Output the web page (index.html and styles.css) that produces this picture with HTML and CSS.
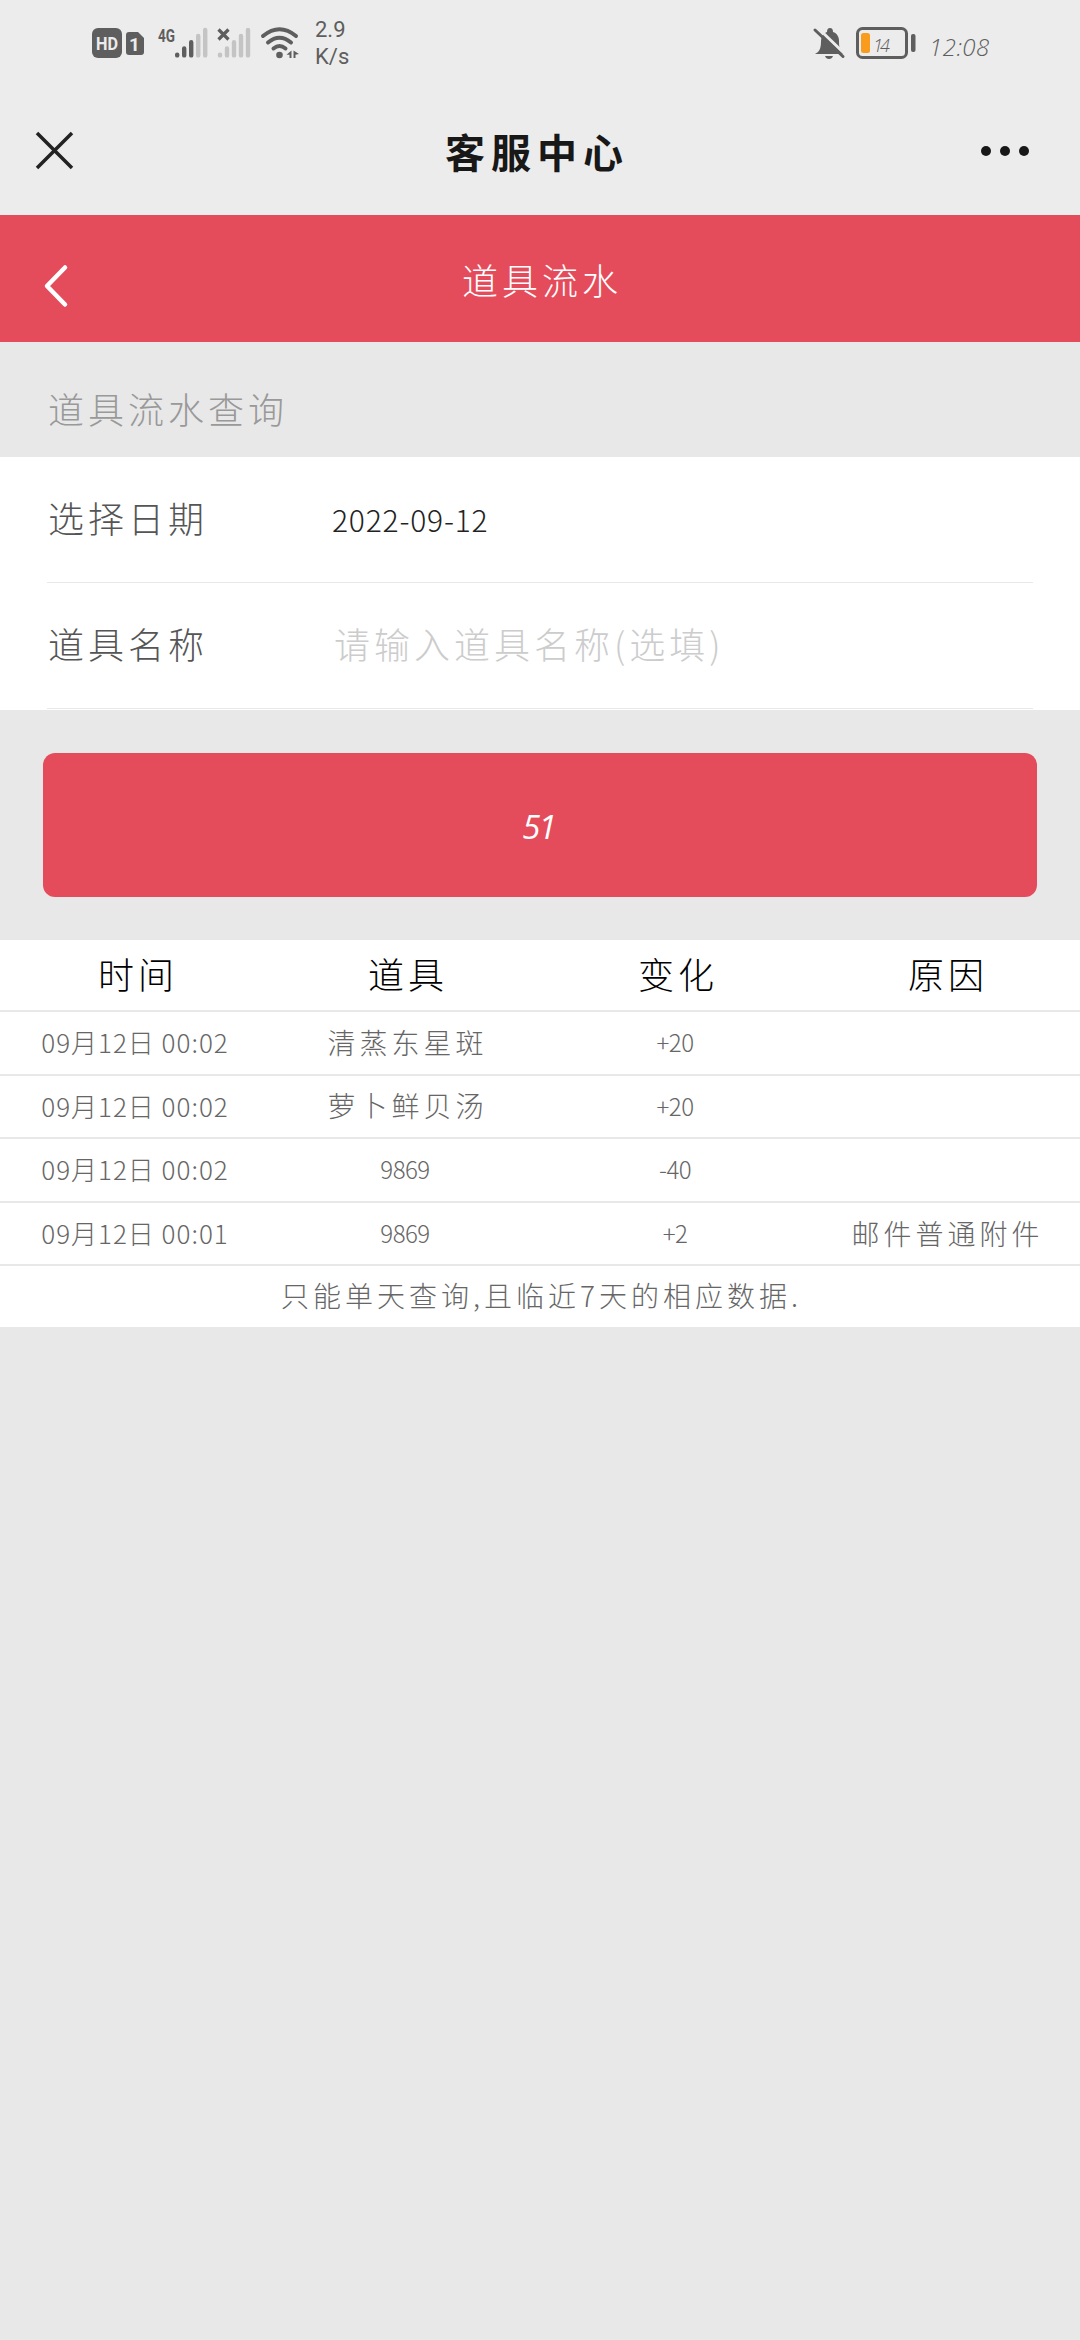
FILE: index.html
```html
<!DOCTYPE html>
<html lang="zh-CN">

<head>
  <meta charset="UTF-8">
  <meta name="viewport" content="width=device-width, initial-scale=1.0">
  <title>客服中心</title>
  <link rel="stylesheet" href="styles.css">
</head>

<body>
  <div class="status-bar">
    <div class="status-left">
      <svg class="hd" width="30" height="30" viewBox="0 0 30 30">
        <rect width="30" height="30" rx="6" fill="#5e5e5e"></rect>
        <text x="15" y="22" text-anchor="middle" textLength="22" lengthAdjust="spacingAndGlyphs">HD</text>
      </svg>
      <svg class="sim" width="18" height="23" viewBox="0 0 18 23">
        <path d="M3 0H12L18 6V20Q18 23 15 23H3Q0 23 0 20V3Q0 0 3 0Z" fill="#5e5e5e"></path>
        <text x="8.5" y="18.5" text-anchor="middle">1</text>
      </svg>
      <svg class="signal" width="50" height="32" viewBox="0 0 50 32">
        <text x="0" y="15" textLength="17" lengthAdjust="spacingAndGlyphs">4G</text>
        <g stroke="#5e5e5e" stroke-width="4.4" stroke-linecap="round">
          <path d="M19.2 27.6V28.4M26.2 21.5V28.4M33.2 15.2V28.4"></path>
          <path d="M40.2 9V28.4M47.2 3V28.4" stroke="#c4c4c4"></path>
        </g>
      </svg>
      <svg class="signal-off" width="34" height="32" viewBox="0 0 34 32">
        <g stroke="#c4c4c4" stroke-width="4.4" stroke-linecap="round">
          <path d="M3 27.6V28.4M10 21.5V28.4M17 15.2V28.4M24 9V28.4M31 3V28.4"></path>
        </g>
        <path d="M1.500 2.500L11.500 12.500M11.500 2.500L1.500 12.500" stroke="#5e5e5e" stroke-width="3.2"></path>
      </svg>
      <svg class="wifi" width="38" height="32" viewBox="0 0 38 32">
        <g fill="none" stroke="#5e5e5e" stroke-width="4" stroke-linecap="round">
          <path d="M2 9Q18.500 -4.500 35 9"></path>
          <path d="M7 15.500Q18.500 6 30 15.500"></path>
          <path d="M12.500 21.500Q18.500 16.500 24.500 21.500"></path>
        </g>
        <circle cx="18.500" cy="28" r="3.300" fill="#5e5e5e"></circle>
        <path d="M30.500 23.500V31H28.500V27.800H25.500ZM32.500 23.500L38 27L34.500 27.800V31H32.500Z" fill="#5e5e5e"></path>
      </svg>
      <div class="speed">2.9<br>K/s</div>
    </div>
    <div class="status-right">
      <svg width="32" height="32" viewBox="0 0 32 32">
        <path d="M5 25Q8 22 8 15C8 9 11 6 14 5C14 2.500 15 1 17 1C19 1 20 2.500 20 5C24 6 26 10 26 14C26 21 27 23 30 25V27H2Z" fill="#5e5e5e"></path>
        <path d="M12 29H20Q19 32 16 32Q13 32 12 29Z" fill="#5e5e5e"></path>
        <path d="M5 1L34 29" stroke="#ececec" stroke-width="3"></path>
        <path d="M2 3L30 29.500" stroke="#5e5e5e" stroke-width="3" stroke-linecap="round"></path>
      </svg>
      <svg class="battery" width="60" height="32" viewBox="0 0 60 32">
        <rect x="1.500" y="1.500" width="49" height="29" rx="5" fill="none" stroke="#5e5e5e" stroke-width="3"></rect>
        <rect x="5" y="6" width="9" height="20" rx="2.500" fill="#f99b1c"></rect>
        <rect x="55" y="7" width="4.500" height="18" rx="2" fill="#5e5e5e"></rect>
        <text x="17" y="24.500" textLength="17">14</text>
      </svg>
      <time>12:08</time>
    </div>
  </div>

  <nav class="title-bar">
    <svg width="37" height="37" viewBox="0 0 37 37" fill="none" stroke="#222" stroke-width="3.500">
      <path d="M1 1L36 36M36 1L1 36"></path>
    </svg>
    <h1>客服中心</h1>
    <svg width="50" height="12" viewBox="0 0 50 12" fill="#181818">
      <circle cx="6" cy="6" r="5"></circle>
      <circle cx="25" cy="6" r="5"></circle>
      <circle cx="44" cy="6" r="5"></circle>
    </svg>
  </nav>

  <header class="page-header">
    <svg width="24" height="42" viewBox="0 0 24 42" fill="none" stroke="#fff" stroke-width="4.500" stroke-linecap="round" stroke-linejoin="round">
      <path d="M21 2.500L3 21L21 39.500"></path>
    </svg>
    <h2>道具流水</h2>
  </header>

  <main>
    <h3>道具流水查询</h3>
    <form class="query">
      <div class="field">
        <label>选择日期</label>
        <span class="date">2022-09-12</span>
      </div>
      <div class="field">
        <label>道具名称</label>
        <span class="placeholder">请输入道具名称(选填)</span>
      </div>
    </form>

    <button class="submit">51</button>

    <section class="records">
      <div class="row head"><span>时间</span><span>道具</span><span>变化</span><span>原因</span></div>
      <div class="row"><time>09月12日 00:02</time><span>清蒸东星斑</span><b>+20</b><span></span></div>
      <div class="row"><time>09月12日 00:02</time><span>萝卜鲜贝汤</span><b>+20</b><span></span></div>
      <div class="row"><time>09月12日 00:02</time><b>9869</b><b>-40</b><span></span></div>
      <div class="row"><time>09月12日 00:01</time><b>9869</b><b>+2</b><span>邮件普通附件</span></div>
      <p>只能单天查询,且临近7天的相应数据.</p>
    </section>
  </main>
</body>

</html>
```
FILE: styles.css
```css
* {
  box-sizing: border-box;
}

body {
  margin: 0;
  min-height: 2340px;
  background: #e8e8e8;
  color: #666;
  font-family: "Noto Sans CJK SC", sans-serif;
  font-weight: 300;
}

h1, h2, h3, p {
  margin: 0;
}

svg {
  display: block;
  flex: none;
  overflow: visible;
}

/* phone status bar */
.status-bar {
  display: flex;
  justify-content: space-between;
  height: 86px;
  padding: 0 89px 0 92px;
  background: #ececec;
  color: #5e5e5e;
}

.status-left,
.status-right {
  display: flex;
  align-items: center;
}

.status-bar svg text {
  font-family: Roboto, sans-serif;
  font-weight: 700;
  fill: #5e5e5e;
}

.status-bar .hd text {
  font-size: 19px;
  fill: #ececec;
}

.status-bar .sim text {
  font-size: 19px;
  fill: #ececec;
}

.sim {
  margin-left: 4px;
}

.signal {
  margin-left: 14px;
}

.signal text {
  font-size: 18px;
}

.signal-off {
  margin-left: 9px;
}

.wifi {
  margin-left: 10px;
}

.speed {
  margin-left: 16px;
  font: 400 22px/27px Roboto, sans-serif;
}

.battery {
  margin-left: 11px;
}

.status-bar .battery text {
  font: italic 300 18px "Open Sans", sans-serif;
}

.status-right time {
  width: 62px;
  margin: 7px 0 0 13px;
  font: italic 300 24px/30px "Open Sans", sans-serif;
  letter-spacing: 0.5px;
  white-space: nowrap;
}

.title-bar {
  display: grid;
  grid-template-columns: 50px 1fr 50px;
  align-items: center;
  height: 129px;
  padding: 0 50px 0 36px;
  background: #ececec;
}

.title-bar h1 {
  text-align: center;
  font-size: 40px;
  line-height: 60px;
  font-weight: 700;
  letter-spacing: 6px;
  text-indent: 8px;
  color: #181818;
}

.page-header {
  display: grid;
  grid-template-columns: 24px 1fr 24px;
  align-items: center;
  height: 127px;
  padding: 0 44px;
  background: #e54c5b;
  color: #fff;
}

.page-header svg {
  margin-top: 15px;
}

.page-header h2 {
  text-align: center;
  font-size: 36px;
  line-height: 52px;
  font-weight: 300;
  letter-spacing: 4px;
  text-indent: 4px;
}

h3 {
  height: 115px;
  padding: 19px 48px 0;
  font-size: 36px;
  line-height: 94px;
  font-weight: 300;
  letter-spacing: 4px;
  color: #999;
}

.query {
  height: 253px;
  padding: 0 47px;
  background: #fff;
}

.field {
  display: flex;
  align-items: center;
  height: 126px;
  padding-bottom: 5px;
  border-bottom: 1px solid #e8e8e8;
  font-size: 36px;
  letter-spacing: 4px;
}

.field label {
  width: 285px;
  padding-left: 1px;
  color: #555;
}

.date {
  margin-top: 3px;
  font-size: 30px;
  letter-spacing: 0.8px;
  color: #222;
}

.placeholder {
  padding-left: 2px;
  color: #ccc;
}

.submit {
  display: block;
  width: 994px;
  height: 144px;
  margin: 43px auto;
  padding: 2px 3px 0 0;
  border: none;
  border-radius: 12px;
  background: #e54c5b;
  color: #fff;
  font: italic 400 33px "Open Sans", sans-serif;
  letter-spacing: -2px;
}

.records {
  height: 387px;
  background: #fff;
}

.row {
  display: grid;
  grid-template-columns: repeat(4, 1fr);
  align-items: center;
  height: 63.6px;
  padding-bottom: 2px;
  border-bottom: 2px solid #e8e8e8;
  text-align: center;
  text-indent: 5px;
  font-size: 28px;
  letter-spacing: 4px;
}

.row.head {
  height: 72px;
  padding-bottom: 5px;
  font-size: 36px;
  text-indent: 6px;
  color: #000;
}

.row time {
  font-size: 26px;
  letter-spacing: 1px;
  text-indent: 0;
}

.row b {
  font-size: 24px;
  font-weight: 300;
  letter-spacing: -0.5px;
  text-indent: 0;
}

.records p {
  text-align: center;
  font-size: 28px;
  line-height: 58px;
  letter-spacing: 4px;
  text-indent: 3px;
}
```
